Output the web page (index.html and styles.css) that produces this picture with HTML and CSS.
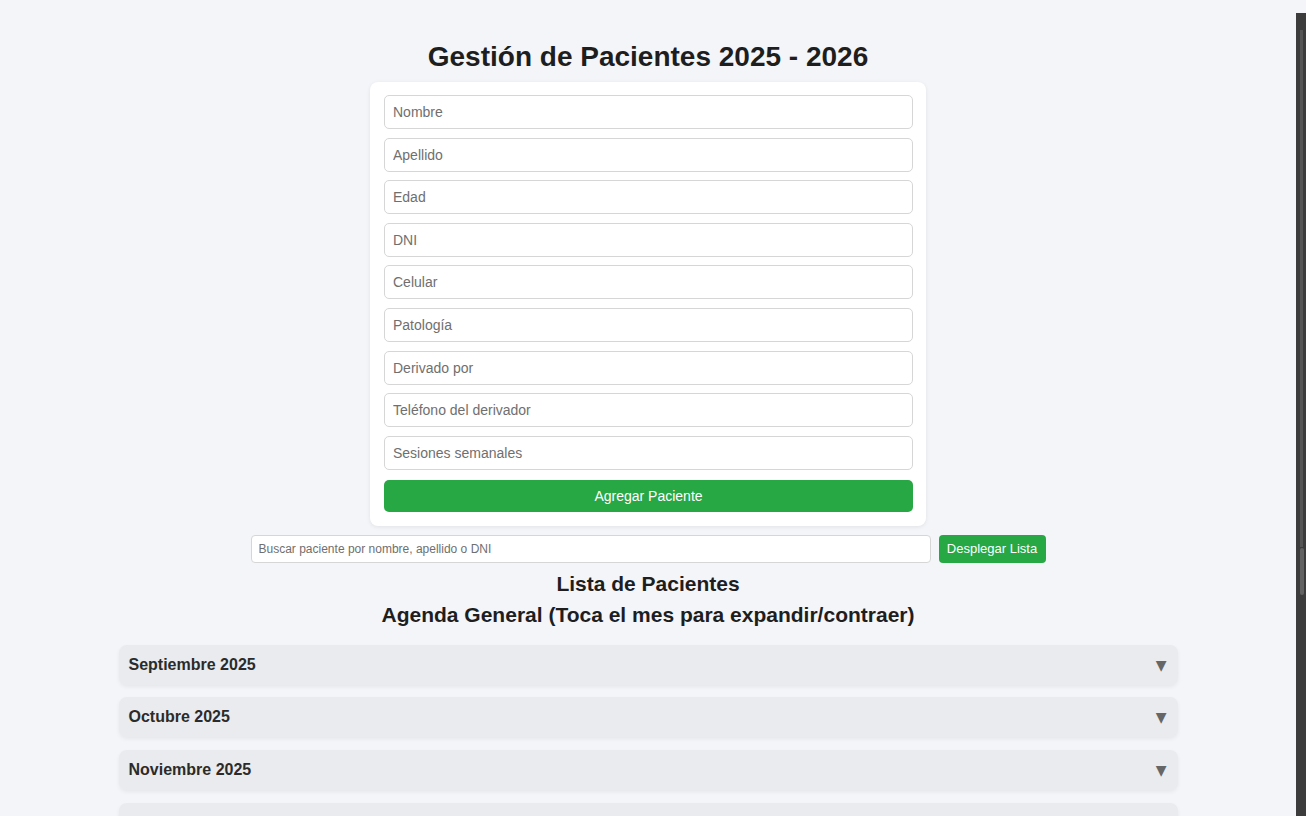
FILE: index.html
```html
<!DOCTYPE html>
<html lang="es">
<head>
<meta charset="utf-8">
<title>Gestión de Pacientes</title>
<link rel="stylesheet" href="styles.css">
</head>
<body>
<div class="page">
  <h1 class="title">Gestión de Pacientes 2025 - 2026</h1>
  <form class="card">
    <input class="field" type="text" placeholder="Nombre">
    <input class="field" type="text" placeholder="Apellido">
    <input class="field" type="text" placeholder="Edad">
    <input class="field" type="text" placeholder="DNI">
    <input class="field" type="text" placeholder="Celular">
    <input class="field" type="text" placeholder="Patología">
    <input class="field" type="text" placeholder="Derivado por">
    <input class="field" type="text" placeholder="Teléfono del derivador">
    <input class="field" type="text" placeholder="Sesiones semanales">
    <button class="add-btn" type="button">Agregar Paciente</button>
  </form>
  <div class="search-row">
    <input class="search" type="text" placeholder="Buscar paciente por nombre, apellido o DNI">
    <button class="list-btn" type="button">Desplegar Lista</button>
  </div>
  <h2 class="subtitle">Lista de Pacientes</h2>
  <h2 class="subtitle agenda">Agenda General (Toca el mes para expandir/contraer)</h2>
  <div class="months">
    <div class="month"><span>Septiembre 2025</span><span class="arrow">▼</span></div>
    <div class="month"><span>Octubre 2025</span><span class="arrow">▼</span></div>
    <div class="month"><span>Noviembre 2025</span><span class="arrow">▼</span></div>
    <div class="month"><span>Diciembre 2025</span><span class="arrow">▼</span></div>
  </div>
</div>
<div class="scrollbar"><div class="track"></div><div class="thumb"></div></div>
</body>
</html>
```
FILE: styles.css
```css
html, body {
  margin: 0;
  padding: 0;
  height: 100%;
  overflow: hidden;
  background: #f4f5f9;
  font-family: "Liberation Sans", Arial, sans-serif;
  color: #222;
}
.page {
  width: 1296px;
  padding-top: 41px;
}
.title {
  margin: 0 0 9px;
  text-align: center;
  font-size: 28px;
  line-height: 32px;
  font-weight: bold;
  color: #1e1e1e;
}
.card {
  width: 556px;
  box-sizing: border-box;
  margin: 0 auto;
  padding: 13px 13px 14px 14px;
  background: #fff;
  border-radius: 8px;
  box-shadow: 0 1px 4px rgba(0,0,0,0.08);
  display: flex;
  flex-direction: column;
  gap: 8.6px;
}
.field {
  height: 34px;
  box-sizing: border-box;
  border: 1px solid #d6d6d6;
  border-radius: 5px;
  padding: 0 8px;
  font-family: "Liberation Sans", Arial, sans-serif;
  font-size: 14px;
  color: #333;
  background: #fff;
  outline: none;
}
.field::placeholder { color: #6f6f6f; }
.add-btn {
  margin-top: 1.5px;
  height: 32px;
  border: none;
  border-radius: 5px;
  background: #28a745;
  color: #fff;
  font-family: "Liberation Sans", Arial, sans-serif;
  font-size: 14px;
}
.search-row {
  margin: 9px auto 0;
  width: 795px;
  display: flex;
  gap: 8px;
}
.search {
  width: 680px;
  height: 28px;
  box-sizing: border-box;
  border: 1px solid #d6d6d6;
  border-radius: 4px;
  padding: 0 7px;
  font-family: "Liberation Sans", Arial, sans-serif;
  font-size: 12px;
  background: #fff;
  outline: none;
}
.search::placeholder { color: #6f6f6f; }
.list-btn {
  width: 107px;
  height: 28px;
  border: none;
  border-radius: 4px;
  background: #28a745;
  color: #fff;
  font-family: "Liberation Sans", Arial, sans-serif;
  font-size: 13px;
  padding: 0;
}
.subtitle {
  margin: 8px 0 0;
  text-align: center;
  font-size: 21px;
  line-height: 26px;
  font-weight: bold;
  color: #1e1e1e;
}
.agenda { margin-top: 5px; }
.months {
  width: 1059px;
  margin: 17px auto 0;
  display: flex;
  flex-direction: column;
  gap: 12.6px;
}
.month {
  height: 40px;
  box-sizing: border-box;
  padding: 0 11px 0 10px;
  background: #e9ebee;
  border-radius: 8px;
  box-shadow: 0 2px 4px rgba(0,0,0,0.06);
  display: flex;
  align-items: center;
  justify-content: space-between;
  font-size: 16px;
  font-weight: bold;
  color: #2b2b2b;
}
.arrow {
  font-family: "DejaVu Sans", sans-serif;
  font-size: 14px;
  color: #666;
  font-weight: normal;
}
.scrollbar {
  position: fixed;
  top: 13px;
  right: 0;
  bottom: 0;
  width: 10px;
  background: #3c3c3c;
}
.track {
  position: absolute;
  top: 17px;
  left: 4px;
  width: 3px;
  height: 517px;
  background: #555;
}
.thumb {
  position: absolute;
  top: 535px;
  left: 4px;
  width: 4px;
  height: 47px;
  background: #626262;
  border-radius: 2px;
}
```
